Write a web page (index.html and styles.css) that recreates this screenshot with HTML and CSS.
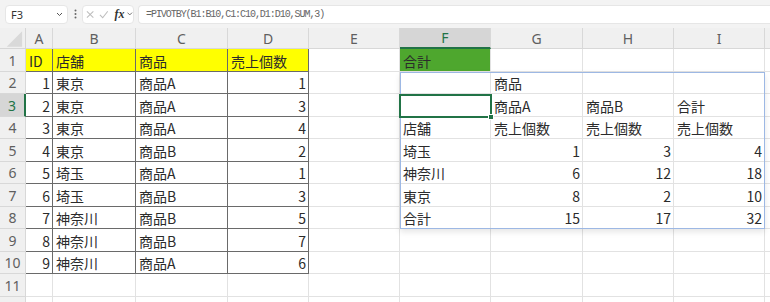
FILE: index.html
```html
<!DOCTYPE html>
<html lang="ja">
<head>
  <meta charset="UTF-8" />
  <title>PIVOTBY</title>
  <link rel="stylesheet" href="styles.css">
</head>
<body>

<div class="fbar">
  <div class="namebox">
    <span>F3</span>
    <svg width="7" height="5" viewBox="0 0 7 5"><path d="M1 1L3.5 3.5L6 1" stroke="#555" fill="none"/></svg>
  </div>
  <div class="dots">
    <svg width="3" height="10" viewBox="0 0 3 10"><circle cx="1.5" cy="1.5" r="1" fill="#666"/><circle cx="1.5" cy="5" r="1" fill="#666"/><circle cx="1.5" cy="8.5" r="1" fill="#666"/></svg>
  </div>
  <div class="fxbox">
    <svg width="9" height="9" viewBox="0 0 9 9"><path d="M1 1L8 8M8 1L1 8" stroke="#bdbdbd" stroke-width="1.1"/></svg>
    <svg width="10" height="9" viewBox="0 0 10 9"><path d="M1 5L4 8L9.5 1" stroke="#bdbdbd" stroke-width="1.1" fill="none"/></svg>
    <span class="fx">fx</span>
    <svg width="6" height="4" viewBox="0 0 6 4"><path d="M0.5 0.5L3 3L5.5 0.5" stroke="#666" fill="none"/></svg>
  </div>
  <div class="formula">=PIVOTBY(B1:B10,C1:C10,D1:D10,SUM,3)</div>
</div>

<div class="wrap">
  <div class="grid sheet" id="sheet"></div>
  <div class="grid overlay">
    <div class="spill"></div>
    <div class="selbox"></div>
  </div>
</div>

<script>
  const letters = ["A", "B", "C", "D", "E", "F", "G", "H", "I", ""];
  const data = [
    ["ID", "店舗", "商品", "売上個数", "", "合計"],
    [1, "東京", "商品A", 1, "", "", "商品"],
    [2, "東京", "商品A", 3, "", "", "商品A", "商品B", "合計"],
    [3, "東京", "商品A", 4, "", "店舗", "売上個数", "売上個数", "売上個数"],
    [4, "東京", "商品B", 2, "", "埼玉", 1, 3, 4],
    [5, "埼玉", "商品A", 1, "", "神奈川", 6, 12, 18],
    [6, "埼玉", "商品B", 3, "", "東京", 8, 2, 10],
    [7, "神奈川", "商品B", 5, "", "合計", 15, 17, 32],
    [8, "神奈川", "商品B", 7],
    [9, "神奈川", "商品A", 6]
  ];

  let html = `<div class="c corner"><svg width="26" height="21" viewBox="0 0 26 21"><polygon points="7,19 23,19 23,3" fill="#d9d9d9"/></svg></div>`;
  letters.forEach(l => {
    html += `<div class="c ch${l === "F" ? " sel" : ""}">${l}</div>`;
  });

  // row 12 only peeks in at the bottom edge, label stays hidden
  for (let r = 1; r <= 12; r++) {
    html += `<div class="c rh${r === 3 ? " sel" : ""}">${r <= 11 ? r : ""}</div>`;
    const row = data[r - 1] || [];
    for (let c = 0; c < letters.length; c++) {
      const v = row[c];
      const cls = ["c"];
      if (typeof v === "number") cls.push("num");
      if (r <= 10 && c < 4) cls.push("tb");
      if (r === 1 && c < 4) cls.push("yel");
      if (r === 1 && c === 5) cls.push("grn");
      html += `<div class="${cls.join(" ")}">${v ?? ""}</div>`;
    }
  }

  document.getElementById("sheet").innerHTML = html;
</script>

</body>
</html>
```

FILE: styles.css
```css
body {
  margin: 0;
  width: 770px;
  height: 302px;
  overflow: hidden;
  background: #fff;
  font-family: "Noto Sans CJK JP", sans-serif;
}

/* formula bar */
.fbar {
  display: flex;
  align-items: center;
  height: 28px;
  padding-left: 5px;
  box-sizing: border-box;
  background: #f3f3f3;
}

.namebox, .fxbox, .formula {
  height: 19px;
  box-sizing: border-box;
  background: #fff;
  border: 1px solid #e6e6e6;
  border-radius: 4px;
  display: flex;
  align-items: center;
}

.namebox {
  width: 63px;
  justify-content: space-between;
  padding: 0 4px 0 5px;
  font: 11px "Noto Sans", sans-serif;
  color: #333;
}

.dots {
  width: 14px;
  display: flex;
  justify-content: center;
}

.fxbox {
  width: 52px;
  padding-left: 3px;
  gap: 5px;
}

.fx {
  font: italic bold 12px "Liberation Serif", serif;
  color: #333;
  margin-left: 1px;
  margin-right: -2px;
}

.formula {
  flex: 1;
  margin-left: 4px;
  padding-left: 7px;
  border-right: none;
  border-radius: 4px 0 0 4px;
  font: 10px "Liberation Mono", monospace;
  letter-spacing: -1.05px;
  color: #666;
}

/* grid */
.wrap {
  display: grid;
}

.grid {
  grid-area: 1 / 1;
  display: grid;
  grid-template-columns: 26px 27px 83px 92px 81px 91px 91px 92px 91px 91px 60px;
  grid-template-rows: 21px 23px 22px 23px 22px 23px 22px 23px 22px 23px 22px 23px 22px;
}

.c {
  box-sizing: border-box;
  border-right: 1px solid #e2e2e2;
  border-bottom: 1px solid #e2e2e2;
  padding: 1px 3px 0;
  font-size: 14px;
  color: #2b2b2b;
  display: flex;
  align-items: center;
  white-space: nowrap;
  overflow: hidden;
}

.num {
  justify-content: flex-end;
  padding-right: 2px;
}

.corner {
  padding: 0;
  background: #f0f0f0;
  border-color: #d6d6d6;
}

.ch, .rh {
  justify-content: center;
  padding: 0;
  background: #f0f0f0;
  border-color: #d8d8d8;
  font-family: "Noto Sans", sans-serif;
  color: #5f5f5f;
}

.ch.sel {
  background: #d6d6d6;
  color: #217346;
  border-bottom: 2px solid #217346;
}

.rh.sel {
  background: #d6d6d6;
  color: #217346;
  border-right: 2px solid #217346;
}

.tb {
  border-right-color: #6a6a6a;
  border-bottom-color: #6a6a6a;
}

.yel { background: #ffff00; }
.grn { background: #4ea72e; }

/* spill range + active cell */
.overlay {
  pointer-events: none;
}

.spill {
  grid-column: 7 / 11;
  grid-row: 3 / 10;
  border: 1px solid #9db8e4;
  box-shadow: 0 3px 6px rgba(0,0,0,0.1);
}

.selbox {
  grid-column: 7 / 8;
  grid-row: 4 / 5;
  margin: 0 -1px -1px -1px;
  border: 2px solid #217346;
  position: relative;
}

.selbox::after {
  content: "";
  position: absolute;
  right: -4px;
  bottom: -4px;
  width: 4px;
  height: 4px;
  background: #217346;
  border: 1px solid #fff;
}
```
